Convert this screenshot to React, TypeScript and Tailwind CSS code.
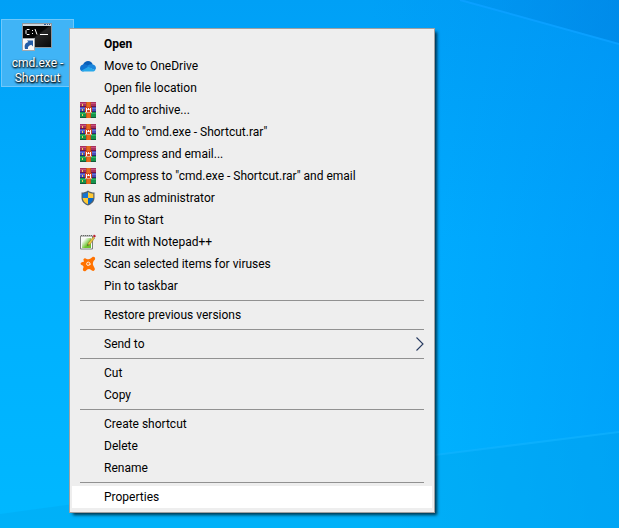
import type { ReactNode } from "react";
import { clsx } from "clsx";

const CloudIcon = () => (
  <svg viewBox="0 0 16 16" className="h-4 w-4" aria-hidden="true">
    <path d="M3 7C4 4 6 3 8 3c2.500 0 4 1.500 4.700 3.500L8 9.500Z" fill="#0a5fb8" />
    <path d="M0 10.500C0 8 1.500 6.500 4 6.300c1-.2 2 .2 3 .8l5 3-9 3.400C1 13.300 0 12 0 10.500Z" fill="#1173d0" />
    <path d="M7 8.500c1.500-1.800 3-2.500 5-2.200 2.500.3 4 1.700 4 4l-1 2Z" fill="#1c86dc" />
    <path d="m1.200 12.700 7.200-3.900 6.900 3.500c-.7.900-1.500 1.200-2.800 1.200H3.500c-1 0-1.700-.2-2.300-.8Z" fill="#28a8ea" />
  </svg>
);

const ArchiveIcon = () => (
  <svg viewBox="0 0 16 16" className="h-4 w-4" shapeRendering="crispEdges" aria-hidden="true">
    <rect width="16" height="5" fill="#a8305f" />
    <rect y="1" width="16" height="1" fill="#c9527a" />
    <rect y="4" width="16" height="1" fill="#6e1745" />
    <rect y="5" width="16" height="5" fill="#4a4cb8" />
    <rect y="6" width="16" height="1" fill="#6a74d6" />
    <rect y="9" width="16" height="1" fill="#2b2a70" />
    <rect y="10" width="16" height="6" fill="#16924b" />
    <rect y="11" width="16" height="1" fill="#2cb565" />
    <rect y="15" width="16" height="1" fill="#125a38" />
    <path d="M2 2h1v2H2zM2 7h1v2H2zM2 12h1v2H2z" fill="#f2cf55" />
    <rect x="6" width="5" height="16" fill="#e56a1c" />
    <path d="M6 0h1v5H6zM10 0h1v5h-1zM6 11h1v5H6zM10 11h1v5h-1z" fill="#c9551a" />
    <rect x="5" y="5" width="7" height="6" fill="#d6471c" />
    <path d="M6 6h1v4H6zM10 6h1v4h-1zM8 6h1v2H8z" fill="#fff" />
    <path d="M7 7h1v1H7zM9 7h1v1H9z" fill="#f3c9b4" />
    <path d="M5 10h7v1H5z" fill="#dfa48c" />
  </svg>
);

const ShieldIcon = () => (
  <svg viewBox="0 0 16 16" className="h-4 w-4" aria-hidden="true">
    <path d="M8 .5c2 1.400 4 2 6.500 2v5c0 4-2.500 6.500-6.500 8-4-1.500-6.500-4-6.500-8v-5C4 2.500 6 1.900 8 .5Z" fill="#56616b" />
    <path d="M8 2C6.500 3 4.500 3.600 2.700 3.700V8H8Z" fill="#1674d1" />
    <path d="M8 2c1.500 1 3.500 1.600 5.300 1.700V8H8Z" fill="#ffc933" />
    <path d="M2.700 8H8v6.200C4.800 13 2.900 11 2.700 8Z" fill="#ffc933" />
    <path d="M13.300 8H8v6.200c3.200-1.200 5.100-3.200 5.300-6.200Z" fill="#0869c9" />
  </svg>
);

const NotepadIcon = () => (
  <svg viewBox="0 0 16 16" className="h-4 w-4" aria-hidden="true">
    <defs>
      <linearGradient id="notepad-paper" x1="0" y1="0" x2="1" y2="1">
        <stop offset=".2" stopColor="#f7fbf3" />
        <stop offset=".65" stopColor="#6cc42c" />
      </linearGradient>
    </defs>
    <path d="M.5 2h12v13H.5z" fill="#fbfbfb" stroke="#7d817d" />
    <path d="M2 4h9v10H2z" fill="url(#notepad-paper)" />
    <path d="M1 1.500h11" stroke="#666" strokeDasharray="1 1" />
    <path d="m7.500 11.500.7-2.500 5-6 1.500 1-4.700 6.500Z" fill="#e8c43e" stroke="#8d7030" strokeWidth=".5" />
    <path d="m12.800 2.300 1.200-1.700 2 1.300-1.300 1.700Z" fill="#ba2030" />
    <path d="m7.300 11.800.4-1.600 1.200.8Z" fill="#34332c" />
  </svg>
);

const AntivirusIcon = () => (
  <svg viewBox="0 0 16 16" className="h-4 w-4" aria-hidden="true">
    <path
      d="M3.500 3.200C4.200 2 5.600 2.200 6.600 2.900c1.300.7 2.800.5 4-.4L12.200 1.200c1.400-.9 3.200.1 2.900 1.700-.2 1.100-1.300 1.400-1.700 2.500-.6 1.300-.7 2.600-.1 4l1.400 2.800c.7 1.600-.7 3.100-2.300 2.600-1.300-.4-1.900-1.600-3.400-1.700-1.500 0-2.200 1-3.300 1.800-1.400.9-3 0-2.800-1.600.1-1 .8-1.600.6-2.700-.3-1-1.200-1-2-1.500C0 8.200.4 6.500 1.900 6.200c1-.1 1.900 0 2-.9 0-.7-.8-1.200-.4-2.100Z"
      fill="#ff7200"
    />
    <circle cx="8.300" cy="7.800" r="1.700" fill="none" stroke="#fff0df" strokeWidth="1" />
    <path d="M8.500 8.200h2.300" stroke="#fff0df" strokeWidth=".8" />
  </svg>
);

const SubmenuArrow = () => (
  <svg viewBox="0 0 8 14" className="h-3.5 w-2" aria-hidden="true">
    <path d="m.5.500 6.500 6.500-6.500 6.500" fill="none" stroke="#26395f" strokeWidth="1.1" />
  </svg>
);

const ConsoleIcon = () => (
  <svg viewBox="1 0 32 28" className="h-7 w-8" aria-hidden="true">
    <defs>
      <linearGradient id="console-screen" x1="0" y1="0" x2="1" y2="1">
        <stop offset=".45" stopColor="#050505" />
        <stop offset=".5" stopColor="#252525" />
        <stop offset="1" stopColor="#080808" />
      </linearGradient>
    </defs>
    <rect x="1" y="0" width="30" height="25" fill="#8c969e" />
    <rect x="2" y="1" width="28" height="2" fill="#ccd5dc" />
    <path d="M23 1.500h2m1 0h1m1 0h1" stroke="#315b94" />
    <rect x="2" y="3" width="28" height="21" fill="url(#console-screen)" />
    <path d="M8.500 6.500H6l-1 1v3l1 1h2.500M11.500 7v1m0 2v1M14 6l2 5.500M19 11.500h8" fill="none" stroke="#fff" />
    <rect x="1.500" y="15.500" width="12" height="12" fill="#f8f8f8" stroke="#a2a8ad" />
    <path d="M4 26c-.8-4 0-6 3.400-7L6 17.500h6v6l-1.700-1.700C7.500 22.800 6.500 24 7 26Z" fill="#235da8" />
  </svg>
);

interface MenuItem {
  label: string;
  icon?: ReactNode;
  bold?: boolean;
  submenu?: boolean;
  active?: boolean;
}

const groups: MenuItem[][] = [
  [
    { label: "Open", bold: true },
    { label: "Move to OneDrive", icon: <CloudIcon /> },
    { label: "Open file location" },
    { label: "Add to archive...", icon: <ArchiveIcon /> },
    { label: 'Add to "cmd.exe - Shortcut.rar"', icon: <ArchiveIcon /> },
    { label: "Compress and email...", icon: <ArchiveIcon /> },
    { label: 'Compress to "cmd.exe - Shortcut.rar" and email', icon: <ArchiveIcon /> },
    { label: "Run as administrator", icon: <ShieldIcon /> },
    { label: "Pin to Start" },
    { label: "Edit with Notepad++", icon: <NotepadIcon /> },
    { label: "Scan selected items for viruses", icon: <AntivirusIcon /> },
    { label: "Pin to taskbar" },
  ],
  [{ label: "Restore previous versions" }],
  [{ label: "Send to", submenu: true }],
  [{ label: "Cut" }, { label: "Copy" }],
  [{ label: "Create shortcut" }, { label: "Delete" }, { label: "Rename" }],
  [{ label: "Properties", active: true }],
];

const Wallpaper = () => (
  <svg
    viewBox="0 0 619 528"
    preserveAspectRatio="none"
    className="absolute inset-0 h-full w-full"
    aria-hidden="true"
  >
    <defs>
      <linearGradient id="sky" x1="0" y1="0" x2="0" y2="1">
        <stop offset="0" stopColor="#00a0f6" />
        <stop offset=".45" stopColor="#00aeff" />
        <stop offset="1" stopColor="#00b8ff" />
      </linearGradient>
      <linearGradient id="sky-right" x1="0" y1="0" x2="1" y2="0">
        <stop offset=".6" stopColor="#0084f2" stopOpacity="0" />
        <stop offset="1" stopColor="#0084f2" stopOpacity=".35" />
      </linearGradient>
      <linearGradient id="corner" x1="0" y1="0" x2="1" y2="0">
        <stop offset="0" stopColor="#0088e5" stopOpacity=".2" />
        <stop offset="1" stopColor="#0084e2" stopOpacity=".6" />
      </linearGradient>
    </defs>
    <path d="M0 0h619v528H0z" fill="url(#sky)" />
    <path d="M0 0h619v528H0z" fill="url(#sky-right)" />
    <path d="M460 0h159v44Z" fill="url(#corner)" />
    <path d="m460 0 159 44" stroke="#0aa0ff" strokeWidth="2" />
    <path d="M0 514 435 455l184-23v96H0Z" fill="#00a3e8" fillOpacity=".3" />
    <path d="m435 455 184-23" stroke="#12b4ff" strokeWidth="2" strokeOpacity=".6" />
  </svg>
);

const ContextMenu = () => (
  <div
    role="menu"
    className="absolute top-7 left-[69px] w-[366px] border border-[#a0a0a0] bg-[#eeeeee] px-0.5 py-1 shadow-[3px_3px_3px_-1px_rgba(0,0,0,0.7)]"
  >
    {groups.map((items, i) => (
      <div
        key={i}
        role="group"
        className={clsx(i > 0 && "before:mx-2 before:my-[3px] before:block before:h-px before:bg-[#919191]")}
      >
        {items.map((item) => (
          <button
            key={item.label}
            type="button"
            role="menuitem"
            aria-haspopup={item.submenu ? "menu" : undefined}
            className={clsx(
              "flex h-[22px] w-full items-center gap-2 px-2 text-left text-xs whitespace-nowrap text-black hover:bg-white",
              item.bold && "font-bold",
              item.active && "bg-white",
            )}
          >
            <span className="h-4 w-4 shrink-0">{item.icon}</span>
            <span className="flex-1">{item.label}</span>
            {item.submenu && <SubmenuArrow />}
          </button>
        ))}
      </div>
    ))}
  </div>
);

export default function App() {
  return (
    <main className="relative min-h-screen overflow-hidden bg-[#00a9fb] pt-[19px] pl-px font-[Roboto,'Noto_Sans',sans-serif]">
      <Wallpaper />
      <button
        type="button"
        className="relative flex h-[68px] w-[73px] flex-col items-center border border-[#6fc8fb] bg-[#40b4f6] pt-[3px] text-xs leading-[15px] text-white [text-shadow:1px_1px_2px_#000,0_1px_2px_#000]"
      >
        <ConsoleIcon />
        <span className="mt-[5px]">
          cmd.exe -<br />
          Shortcut
        </span>
      </button>
      <ContextMenu />
    </main>
  );
}
